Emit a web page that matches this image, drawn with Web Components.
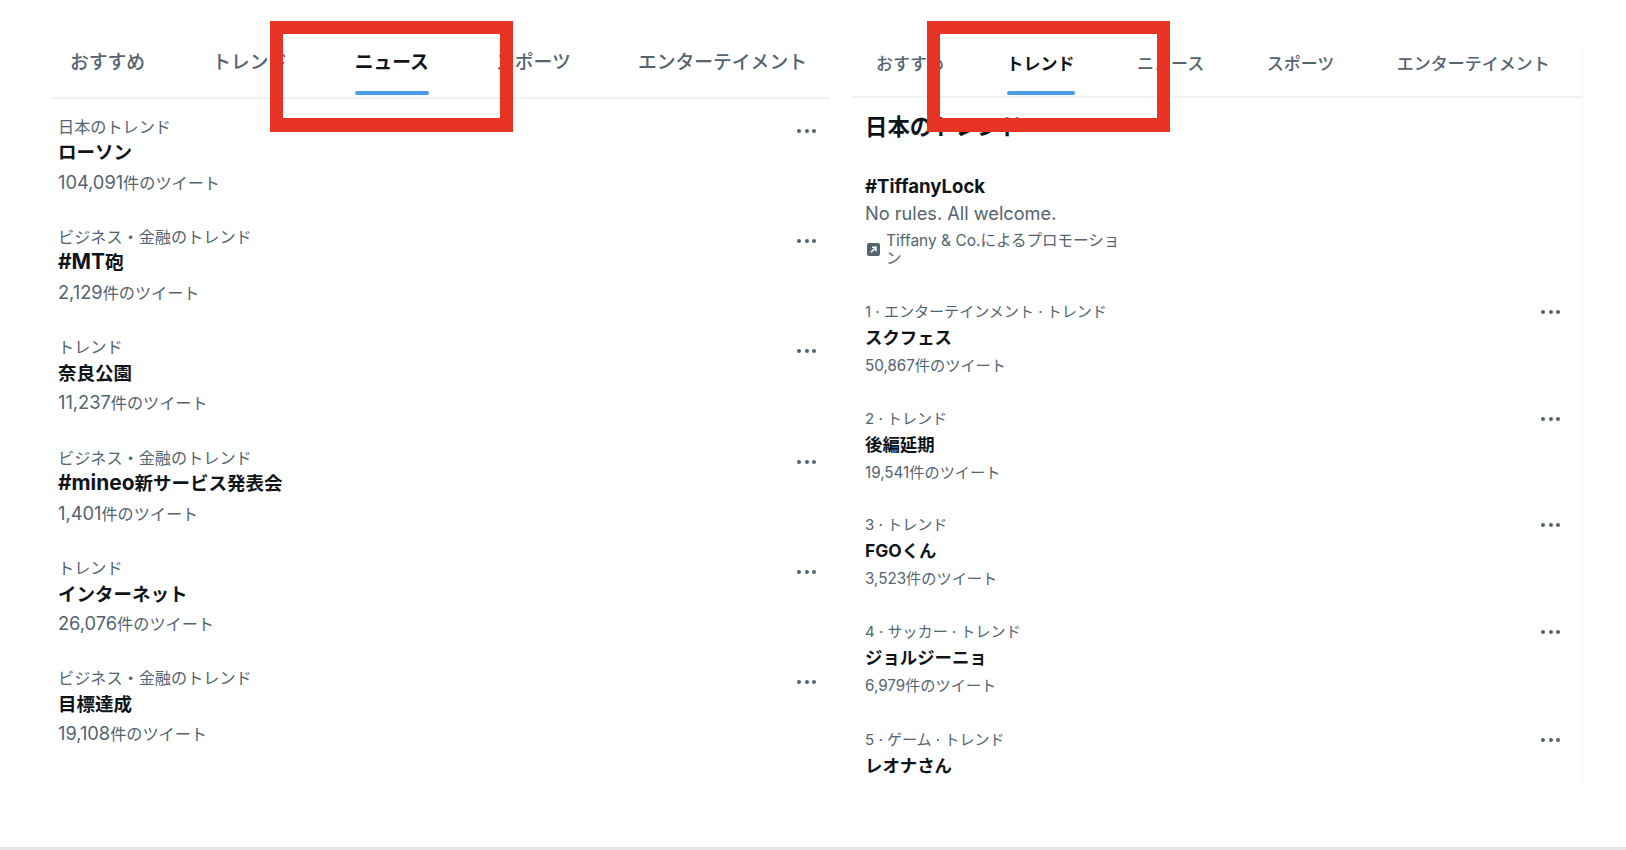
<!DOCTYPE html>
<html lang="ja"><head><meta charset="utf-8"><style>
html,body{margin:0;padding:0;background:#fff}
body{width:1626px;height:850px;overflow:hidden;font-family:Inter,"Noto Sans CJK JP",sans-serif}
</style></head><body>
<trend-page></trend-page>
<script>
const FONT='Inter,"Noto Sans CJK JP",sans-serif';
class TabBar extends HTMLElement{
  connectedCallback(){
    const tabs=this.getAttribute('tabs').split(',');const act=+this.getAttribute('active');
    const r=this.attachShadow({mode:'open'});
    r.innerHTML=`<style>
    :host{display:flex;box-sizing:border-box;gap:var(--gap);padding-left:var(--pad);height:var(--h);border-bottom:2px solid #eff3f4;font:500 var(--fs) ${FONT};color:#536471}
    .t{position:relative;line-height:var(--lh);white-space:nowrap}
    .a{color:#0f1419;font-weight:700}
    .a::after{content:"";position:absolute;left:0;right:0;top:var(--ut);height:4px;border-radius:2px;background:#4c9be8}
    </style>`+tabs.map((t,i)=>`<div class="t${i===act?' a':''}">${t}</div>`).join('');
  }
}
customElements.define('tab-bar',TabBar);
class MoreDots extends HTMLElement{
  constructor(){super();this.attachShadow({mode:'open'}).innerHTML=`<style>
  :host{display:flex;gap:3.4px;align-items:center}
  i{width:4px;height:4px;border-radius:50%;background:#536471;display:block}</style><i></i><i></i><i></i>`;}
}
customElements.define('more-dots',MoreDots);
class LatinRun extends HTMLElement{
  constructor(){super();this.attachShadow({mode:'open'}).innerHTML=`<style>:host{display:inline;font-size:var(--lat,1em)}</style><slot></slot>`;}
}
customElements.define('latin-run',LatinRun);
class TrendRow extends HTMLElement{
  constructor(){super();this.attachShadow({mode:'open'}).innerHTML=`<style>
  :host{display:block;position:relative;height:var(--row);font-family:${FONT}}
  .m,.c{color:#536471;font-size:var(--mfs);line-height:var(--mlh);white-space:nowrap;height:var(--mlh)}
  .ti{color:#0f1419;font-weight:700;font-size:var(--tfs);line-height:26px;height:26px;margin-top:var(--tm);white-space:nowrap}
  .c{margin-top:var(--cm);font-size:var(--cfs)}
  more-dots{position:absolute;right:var(--dr);top:var(--dt)}
  </style><div class="m"><slot name="meta"></slot></div><div class="ti"><slot name="title"></slot></div><div class="c"><slot name="count"></slot></div><more-dots></more-dots>`;}
}
customElements.define('trend-row',TrendRow);
class PromoCard extends HTMLElement{
  constructor(){super();this.attachShadow({mode:'open'}).innerHTML=`<style>
  :host{display:block;font-family:${FONT};margin-bottom:32.25px}
  .h{font-size:18.6px;font-weight:700;line-height:26px;color:#0f1419}
  .d{font-size:18.2px;line-height:26px;margin-top:1px;color:#536471}
  .p{display:flex;margin-top:6.1px;color:#536471;font-size:15.5px;line-height:18.5px}
  .i{flex:none;width:13px;height:13px;margin:11px 6px 0 2px}
  .x{width:236px}
  </style><div class="h"><slot name="h"></slot></div><div class="d"><slot name="d"></slot></div>
  <div class="p"><svg class="i" viewBox="0 0 13 13"><rect x="0" y="0" width="13" height="13" rx="2" fill="#536471"/><path d="M4 9.2 8.6 4.6M5 4.2H9V8.2" stroke="#fff" stroke-width="1.6" fill="none"/></svg><div class="x"><slot name="p"></slot></div></div>`;}
}
customElements.define('promo-card',PromoCard);
const lat=s=>s.replace(/[#0-9A-Za-z,]+/g,m=>`<latin-run>${m}</latin-run>`);
class LeftPanel extends HTMLElement{
  constructor(){super();const rows=[
  ['日本のトレンド','ローソン','104,091件のツイート'],
  ['ビジネス・金融のトレンド','#MT砲','2,129件のツイート'],
  ['トレンド','奈良公園','11,237件のツイート'],
  ['ビジネス・金融のトレンド','#mineo新サービス発表会','1,401件のツイート'],
  ['トレンド','インターネット','26,076件のツイート'],
  ['ビジネス・金融のトレンド','目標達成','19,108件のツイート']];
  this.attachShadow({mode:'open'}).innerHTML=`<style>
  :host{display:block;width:778px;margin-top:36px;flex:none;--lat:1.13em;
   --gap:67.2px;--pad:18px;--h:63px;--fs:18.8px;--lh:54px;--ut:55px;
   --row:110.4px;--mfs:16.15px;--cfs:16.15px;--mlh:24px;--tfs:18.5px;--tm:0.5px;--cm:4.5px;--dr:14px;--dt:14px}
  .l{padding:15.5px 0 0 6px}
  </style><tab-bar tabs="おすすめ,トレンド,ニュース,スポーツ,エンターテイメント" active="2"></tab-bar><div class="l">`+
  rows.map(r=>`<trend-row><span slot="meta">${r[0]}</span><span slot="title">${lat(r[1])}</span><span slot="count">${lat(r[2])}</span></trend-row>`).join('')+`</div>`;}
}
customElements.define('left-panel',LeftPanel);
class RightPanel extends HTMLElement{
  constructor(){super();const rows=[
  ['1 · エンターテインメント · トレンド','スクフェス','50,867件のツイート'],
  ['2 · トレンド','後編延期','19,541件のツイート'],
  ['3 · トレンド','FGOくん','3,523件のツイート'],
  ['4 · サッカー · トレンド','ジョルジーニョ','6,979件のツイート'],
  ['5 · ゲーム · トレンド','レオナさん','5,041件のツイート']];
  this.attachShadow({mode:'open'}).innerHTML=`<style>
  :host{display:block;box-sizing:border-box;width:731px;height:739px;margin-top:46px;flex:none;overflow:hidden;border-right:1px solid #eff3f4;
   --gap:62.5px;--pad:24px;--h:52px;--fs:17px;--lh:36px;--ut:45px;
   --row:106.6px;--mfs:15.05px;--cfs:15.2px;--mlh:22px;--tfs:17.4px;--tm:2px;--cm:4px;--dr:22px;--dt:9px}
  .l{padding:14px 0 0 13px}
  trend-row:last-child{margin-top:2px}
  h2{margin:0 0 30.6px;font:700 22.4px/30px ${FONT};color:#0f1419}
  </style><tab-bar tabs="おすすめ,トレンド,ニュース,スポーツ,エンターテイメント" active="1"></tab-bar><div class="l"><h2>日本のトレンド</h2>
  <promo-card><span slot="h">#TiffanyLock</span><span slot="d">No rules. All welcome.</span><span slot="p">Tiffany &amp; Co.によるプロモーション</span></promo-card>`+
  rows.map(r=>`<trend-row><span slot="meta">${r[0]}</span><span slot="title">${r[1]}</span><span slot="count">${r[2]}</span></trend-row>`).join('')+`</div>`;}
}
customElements.define('right-panel',RightPanel);
class RedBox extends HTMLElement{
  constructor(){super();this.attachShadow({mode:'open'}).innerHTML=`<style>
  :host{position:absolute;display:block;box-sizing:border-box;top:21px;height:111px;border:solid #e63323;border-width:13px 13px 14px 13px}
  </style>`;}
}
customElements.define('red-box',RedBox);
class TrendPage extends HTMLElement{
  constructor(){super();this.attachShadow({mode:'open'}).innerHTML=`<style>
  :host{display:flex;flex-direction:column;position:relative;width:1626px;height:850px}
  .m{flex:1;display:flex;gap:22px;padding-left:52px;align-items:flex-start;overflow:hidden}
  .s{height:3px;background:#e5e6e8}
  </style><div class="m"><left-panel></left-panel><right-panel></right-panel></div><div class="s"></div>
  <red-box style="left:270px;width:243px"></red-box><red-box style="left:927px;width:243px"></red-box>`;}
}
customElements.define('trend-page',TrendPage);
</script></body></html>
